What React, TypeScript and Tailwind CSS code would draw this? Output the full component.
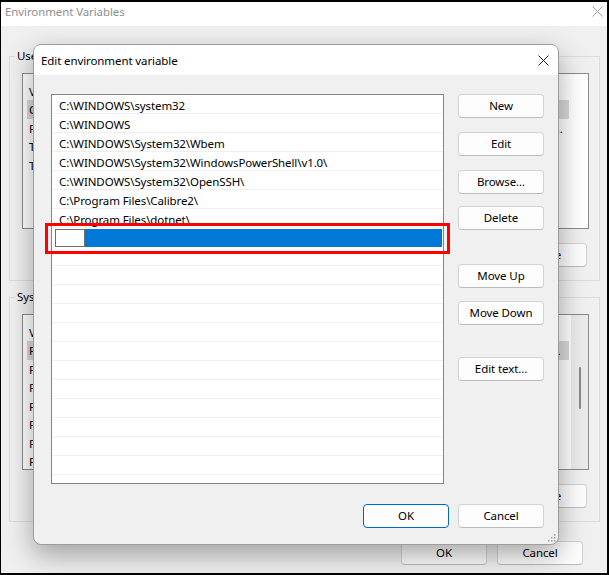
const FONT = "font-['Noto_Sans','Liberation_Sans',sans-serif]";

const paths = [
  "C:\\WINDOWS\\system32",
  "C:\\WINDOWS",
  "C:\\WINDOWS\\System32\\Wbem",
  "C:\\WINDOWS\\System32\\WindowsPowerShell\\v1.0\\",
  "C:\\WINDOWS\\System32\\OpenSSH\\",
  "C:\\Program Files\\Calibre2\\",
  "C:\\Program Files\\dotnet\\",
];

const userVars: [string, string][] = [
  ["OneDrive", "C:\\Users\\user\\OneDrive"],
  ["Path", "C:\\Users\\user\\AppData\\Local\\Microsoft\\WindowsApps;C:\\Users\\user\\AppData\\Local\\Programs\\Microsoft VS Code\\bin;C:\\Users\\user\\.dotnet\\tools"],
  ["TEMP", "C:\\Users\\user\\AppData\\Local\\Temp"],
  ["TMP", "C:\\Users\\user\\AppData\\Local\\Temp"],
];

const systemVars: [string, string][] = [
  ["Path", "C:\\WINDOWS\\system32;C:\\WINDOWS;C:\\WINDOWS\\System32\\Wbem;C:\\WINDOWS\\System32\\WindowsPowerShell\\v1.0\\;C:\\WINDOWS\\System32\\OpenSSH\\"],
  ["PATHEXT", ".COM;.EXE;.BAT;.CMD;.VBS;.VBE;.JS;.JSE;.WSF;.WSH;.MSC"],
  ["PROCESSOR_ARCHITECTURE", "AMD64"],
  ["PROCESSOR_IDENTIFIER", "Intel64 Family 6 Model 140 Stepping 1, GenuineIntel"],
  ["PROCESSOR_LEVEL", "6"],
  ["PROCESSOR_REVISION", "8c01"],
  ["PSModulePath", "%ProgramFiles%\\WindowsPowerShell\\Modules"],
];

function WinButton({ label, primary, className }: { label: string; primary?: boolean; className?: string }) {
  return (
    <button
      className={`flex h-[24px] w-[86px] shrink-0 items-center justify-center rounded-[4px] border bg-[#fdfdfd] leading-[16px] text-black ${
        primary ? "border-[#0067c0]" : "border-[#d3d3d3] border-b-[#bcbcbc]"
      } ${className ?? ""}`}
    >
      {label}
    </button>
  );
}

function CloseIcon({ color }: { color: string }) {
  return (
    <svg width="11" height="11" viewBox="0 0 11 11" fill="none">
      <path d="M0.5 0.5 L10.5 10.5 M10.5 0.5 L0.5 10.5" stroke={color} strokeWidth="1" />
    </svg>
  );
}

function VarList({ rows, scroll }: { rows: [string, string][]; scroll?: boolean }) {
  return (
    <div className="flex h-[156px] border border-[#8c8c8c] bg-white">
      <div className="min-w-0 flex-1 overflow-hidden">
        <div className="flex h-[26px] items-end pl-[6px]">
          <span className="w-[124px] shrink-0">Variable</span>
          <span>Value</span>
        </div>
        {rows.map(([name, value], i) => (
          <div
            key={name}
            className={`ml-[4px] flex h-[18.5px] w-[542px] items-center pt-[1px] ${i === 0 ? "bg-[#d9d9d9]" : ""}`}
          >
            <span className="w-[124px] shrink-0 truncate pl-[2px]">{name}</span>
            <span className="min-w-0 flex-1 truncate pr-[6px]">{value}</span>
          </div>
        ))}
      </div>
      {scroll && (
        <div className="w-[17px] shrink-0 bg-[#ebebeb] pt-[52px]">
          <div className="mx-auto h-[42px] w-[2px] rounded-full bg-[#8a8a8a]" />
        </div>
      )}
    </div>
  );
}

function GroupBox({ label, rows, scroll }: { label: string; rows: [string, string][]; scroll?: boolean }) {
  return (
    <div className="relative ml-[8px] mr-[7px] border border-[#dcdcdc] pb-[13px] pl-[12px] pr-[10px] pt-[16px]">
      <span className="absolute -top-[9px] left-[5px] bg-[#f0f0f0] px-[2px] leading-[16px]">{label}</span>
      <VarList rows={rows} scroll={scroll} />
      <div className="mr-[2px] mt-[14px] flex justify-end gap-[10px]">
        <WinButton label="New..." />
        <WinButton label="Edit..." />
        <WinButton label="Delete" />
      </div>
    </div>
  );
}

function EditDialog() {
  const empty = Array.from({ length: 14 });
  return (
    <div className="absolute left-[33px] top-[44px] flex h-[501px] w-[526px] flex-col overflow-hidden rounded-[8px] border border-[#9c9c9c] bg-[#f0f0f0] shadow-[0_10px_28px_rgba(0,0,0,0.34)]">
      <div className="flex h-[30px] shrink-0 items-center justify-between bg-white pl-[7px] pr-[9px]">
        <span className="pt-[1px] leading-[16px]">Edit environment variable</span>
        <CloseIcon color="#1a1a1a" />
      </div>
      <div className="flex flex-1 flex-col pl-[17px] pr-[14px] pt-[19px]">
        <div className="flex">
          <div className="h-[390px] w-[393px] shrink-0 overflow-hidden border border-[#858585] bg-white">
            {paths.map((p) => (
              <div key={p} className="h-[19px] border-b border-[#efefef] pl-[7px] pt-[3px] leading-[15px]">
                {p}
              </div>
            ))}
            <div className="flex h-[19px] pl-[3px] pr-[1px] pt-[1px]">
              <div className="h-[18px] w-[30px] shrink-0 border border-[#6e6e6e] bg-white" />
              <div className="h-[18px] flex-1 bg-[#0078d7]" />
            </div>
            {empty.map((_, i) => (
              <div key={i} className="h-[19px] border-b border-[#efefef]" />
            ))}
          </div>
          <div className="ml-[14px] flex flex-col">
            <WinButton label="New" />
            <WinButton label="Edit" className="mt-[14px]" />
            <WinButton label="Browse..." className="mt-[14px]" />
            <WinButton label="Delete" className="mt-[12px]" />
            <WinButton label="Move Up" className="mt-[34px]" />
            <WinButton label="Move Down" className="mt-[13px]" />
            <WinButton label="Edit text..." className="mt-[32px]" />
          </div>
        </div>
        <div className="mt-[20px] flex justify-end gap-[9px]">
          <WinButton label="OK" primary />
          <WinButton label="Cancel" />
        </div>
      </div>
      <svg className="absolute bottom-[2px] right-[2px]" width="8" height="8" viewBox="0 0 8 8">
        <rect x="6" y="0" width="1.5" height="1.5" fill="#a0a0a0" />
        <rect x="3" y="3" width="1.5" height="1.5" fill="#a0a0a0" />
        <rect x="6" y="3" width="1.5" height="1.5" fill="#a0a0a0" />
        <rect x="0" y="6" width="1.5" height="1.5" fill="#a0a0a0" />
        <rect x="3" y="6" width="1.5" height="1.5" fill="#a0a0a0" />
        <rect x="6" y="6" width="1.5" height="1.5" fill="#a0a0a0" />
      </svg>
    </div>
  );
}

export default function App() {
  return (
    <div className={`relative h-[575px] w-[609px] overflow-hidden text-[11.5px] tracking-[-0.1px] text-black ${FONT}`}>
      <div className="flex h-full flex-col border-b-2 border-l border-r-2 border-t-2 border-black bg-[#f0f0f0]">
        <div className="flex h-[24px] shrink-0 items-center justify-between bg-white pb-[5px] pl-[4px] pr-[4px]">
          <span className="leading-[16px] text-[#8f8f8f]">Environment Variables</span>
          <CloseIcon color="#a0a0a0" />
        </div>
        <div className="mt-[30px]">
          <GroupBox label="User variables for user" rows={userVars} />
        </div>
        <div className="mt-[16px]">
          <GroupBox label="System variables" rows={systemVars} scroll />
        </div>
        <div className="mr-[24px] mt-[19px] flex justify-end gap-[10px]">
          <WinButton label="OK" />
          <WinButton label="Cancel" />
        </div>
      </div>
      <EditDialog />
      <div className="absolute left-[45px] top-[223px] h-[31px] w-[405px] border-[3px] border-[#ff0000]" />
    </div>
  );
}
